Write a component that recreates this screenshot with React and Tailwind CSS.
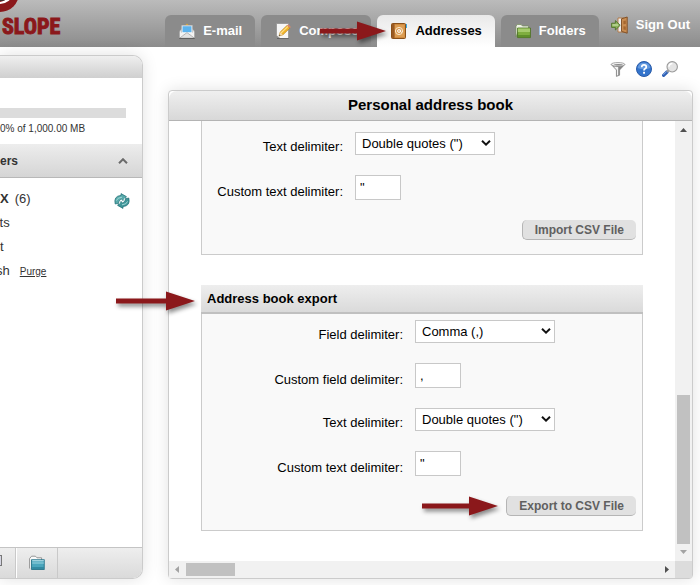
import React, { useId } from "react";

const MailIcon = () => (
  <svg width="16" height="16" viewBox="0 0 16 16" aria-hidden="true">
    <path d="M6 2.5 L8 0.6 L10 2.5Z" fill="#d9a93c" />
    <path d="M0.5 8 L3 5.5 H13 L15.5 8 V15 H0.5Z" fill="#e4e4e4" stroke="#8a8a8a" strokeWidth="0.6" />
    <rect x="2.5" y="2.2" width="11" height="9" fill="#f6f6f6" stroke="#9c9c9c" strokeWidth="0.4" />
    <rect x="3.5" y="3.2" width="9" height="6" fill="#5cb3ee" />
    <path d="M0.8 15 V8.4 L6 12 L8 10.4 L10 12 L15.2 8.4 V15Z" fill="#f3f3f3" />
    <path d="M0.8 15 L8 9.6 L15.2 15" fill="#e3e3e3" stroke="#a9a9a9" strokeWidth="0.8" />
    <path d="M0.3 15.4 H15.7" stroke="#555" strokeWidth="0.9" />
  </svg>
);

const ComposeIcon = () => (
  <svg width="16" height="16" viewBox="0 0 16 16" aria-hidden="true">
    <path d="M1.5 0.5 H13.5 V15.5 H5 L1.5 12.5Z" fill="#f7f7f7" stroke="#8c8c8c" strokeWidth="0.7" />
    <path d="M2 15.6 H13.8" stroke="#555" strokeWidth="0.8" />
    <path d="M4 13 L5.2 9 L12 2.4 L15 5 L8 11.8Z" fill="#f0b429" stroke="#b97d17" strokeWidth="0.6" />
    <path d="M6 10 L13 3.4" stroke="#ffe08a" strokeWidth="1.1" />
    <path d="M4 13 L5.2 9.2 L7.8 11.7Z" fill="#f2d6a8" />
    <path d="M4 13 L4.5 11.5 L5.5 12.4Z" fill="#333" />
    <path d="M12 2.4 L13.3 1.3 L15.9 3.9 L15 5Z" fill="#d9886b" />
  </svg>
);

const BookIcon = () => (
  <svg width="16" height="16" viewBox="0 0 16 16" aria-hidden="true">
    <rect x="12" y="1" width="4" height="4" fill="#38a9e4" />
    <rect x="12" y="5" width="3" height="9" fill="#e8e8e8" />
    <rect x="0.5" y="0.5" width="14" height="15" rx="1" fill="#cf8a3f" stroke="#8a5018" />
    <rect x="1" y="1" width="2.5" height="14" fill="#9a5a22" />
    <rect x="4" y="2" width="9.5" height="12" fill="#dc9c51" />
    <circle cx="8" cy="8" r="3.6" fill="none" stroke="#fbe8cc" strokeWidth="1" />
    <circle cx="8" cy="8" r="1.4" fill="none" stroke="#fff" strokeWidth="1" />
    <path d="M9.6 6.6 V9 Q10.4 10 11.4 8.6" fill="none" stroke="#fff" strokeWidth="0.8" />
  </svg>
);

const GreenFolderIcon = () => (
  <svg width="16" height="16" viewBox="0 0 16 16" aria-hidden="true">
    <path d="M1 14 V3 L2.5 1.5 H6 L7.5 3 H13.5 V6 H4Z" fill="#eef1e6" stroke="#76905a" strokeWidth="0.7" />
    <path d="M2.6 5 H15.4 V14.6 H2.6Z" fill="#7fae3f" stroke="#456b1c" strokeWidth="0.8" />
    <path d="M3 5.5 H15 V9 H3Z" fill="#a6cb6e" />
    <path d="M3 12 H15 V14.2 H3Z" fill="#5f8f2a" />
  </svg>
);

const SignOutIcon = () => (
  <svg width="17" height="18" viewBox="0 0 17 18" aria-hidden="true">
    <path d="M7 2 H13 V16 H7Z" fill="#ececec" stroke="#b5763f" strokeWidth="0.9" />
    <path d="M10.5 2.8 L16.2 1 V17.2 L10.5 15.4Z" fill="#c98d52" stroke="#7b4a1f" strokeWidth="0.9" />
    <path d="M12.4 5 L14.8 4.4 V8 L12.4 8.3Z M12.4 10.3 L14.8 10.5 V14 L12.4 13.4Z" fill="#a5672f" />
    <path d="M0.6 7.2 H4.4 V4.6 L9.2 9.3 L4.4 14 V11.4 H0.6Z" fill="#8db45c" stroke="#4f7128" strokeWidth="0.9" />
    <path d="M1.4 9 H7.2" stroke="#d3e7b4" strokeWidth="1" />
  </svg>
);

const FilterIcon = () => (
  <svg width="16" height="16" viewBox="0 0 16 16" aria-hidden="true">
    <path d="M1.2 3.5 L6.4 9 V15.4 L9.6 14.2 V9 L14.8 3.5Z" fill="#858585" stroke="#777" strokeWidth="0.6" />
    <path d="M3.6 5.5 L7 9 V14.6 L8.2 14.2 V6Z" fill="#f3f3f3" />
    <ellipse cx="8" cy="3.4" rx="6.8" ry="1.9" fill="#f0f0f0" stroke="#8a8a8a" strokeWidth="0.7" />
    <ellipse cx="8.4" cy="3.7" rx="4.4" ry="0.8" fill="#8a8a8a" />
  </svg>
);

const HelpIcon = () => (
  <svg width="16" height="16" viewBox="0 0 16 16" aria-hidden="true">
    <circle cx="8" cy="8" r="7.5" fill="#3374cc" stroke="#2a5ba8" />
    <path d="M1.6 7 A6.5 6.5 0 0 1 14.4 7 Q8 9.5 1.6 7Z" fill="#6399df" />
    <path d="M5.7 6.2 Q5.8 3.9 8 3.9 Q10.3 3.9 10.3 5.9 Q10.3 7 9 7.7 Q8 8.3 8 9.4" fill="none" stroke="#fff" strokeWidth="1.7" />
    <rect x="7.1" y="10.8" width="1.9" height="1.9" fill="#fff" />
  </svg>
);

const SearchIcon = () => (
  <svg width="16" height="16" viewBox="0 0 16 16" aria-hidden="true">
    <path d="M1.6 14.4 L5 11" stroke="#2d5fb4" strokeWidth="3.2" strokeLinecap="round" />
    <path d="M1.4 13.8 L4.8 10.4" stroke="#7fa9e6" strokeWidth="1" />
    <path d="M5 11 L7 9" stroke="#999" strokeWidth="1.8" />
    <circle cx="10.2" cy="5.8" r="5.2" fill="#e4e4e4" stroke="#9a9a9a" strokeWidth="1.1" />
    <path d="M7 5.8 A3.4 3.4 0 0 1 10.4 2.4" fill="none" stroke="#fff" strokeWidth="1.5" />
  </svg>
);

const RefreshIcon = () => (
  <svg width="16" height="16" viewBox="0 0 16 16" aria-hidden="true">
    <path d="M1.2 11 Q-0.6 3 7 2.4 V0.6 L12.4 3.6 L9.4 8 L7.6 6.2 Q5 6.8 4.6 10.2 Z" fill="#58a9aa" stroke="#1d6c72" strokeWidth="0.7" />
    <path d="M14.8 5 Q16.6 13 9 13.6 V15.4 L3.6 12.4 L6.6 8 L8.4 9.8 Q11 9.2 11.4 5.8 Z" fill="#3f9598" stroke="#1d6c72" strokeWidth="0.7" />
    <path d="M5.4 10.6 Q5.6 7.6 7.6 7 M10.6 5.4 Q10.4 8.4 8.4 9" fill="none" stroke="#fff" strokeWidth="1" />
    <path d="M2.4 7.6 Q3.2 4.6 8 4.2 M13.6 8.4 Q12.8 11.4 8 11.8" fill="none" stroke="#a9dcdb" strokeWidth="0.9" />
  </svg>
);

const TealFolderIcon = () => (
  <svg width="16" height="16" viewBox="0 0 16 16" aria-hidden="true">
    <path d="M0.6 13.5 V3.5 L2.6 1.2 H6.4 L8 2.8 H12.6 V6" fill="#fafafa" stroke="#8b8b8b" strokeWidth="0.9" />
    <rect x="2.6" y="4.8" width="12.6" height="9.6" fill="#4ba6bd" stroke="#1f6f86" strokeWidth="0.9" />
    <path d="M3.2 5.8 H14.8" stroke="#c2e6ee" strokeWidth="1.1" />
    <path d="M3.2 8 H14.8" stroke="#80c5d5" strokeWidth="1.6" />
    <path d="M3.2 13 H14.8" stroke="#2b8098" strokeWidth="1.4" />
  </svg>
);

// Red pointer used to mark each step
const Arrow = ({ shaft }) => (
  <svg
    width={shaft + 29}
    height="20"
    viewBox={`0 0 ${shaft + 29} 20`}
    className="drop-shadow-[2px_3px_2px_rgba(0,0,0,0.45)]"
    aria-hidden="true"
  >
    <path d={`M0 7.5 H${shaft} V0.5 L${shaft + 29} 10 L${shaft} 19.5 V12.5 H0Z`} fill="#8b181b" />
  </svg>
);

const Tab = ({ icon, label, active, children }) => (
  <a
    href="#"
    className={
      active
        ? "relative flex h-8 items-center gap-2 rounded-t-md bg-linear-to-b from-[#e9e9e9] to-white pr-[13px] pl-3.5 text-black"
        : "relative flex h-8 items-center gap-2 rounded-t-md bg-[#8b8b8b] pr-[13px] pl-3.5 text-white"
    }
  >
    {icon}
    {label}
    {children}
  </a>
);

const SelectField = ({ label, options }) => {
  const id = useId();
  return (
    <>
      <label htmlFor={id} className="text-right leading-4">{label}</label>
      <div className="relative w-[140px]">
        <select
          id={id}
          className="block h-[23px] w-full appearance-none border border-[#c8c8c8] bg-white pl-1.5 text-[13px] leading-5"
        >
          {options.map((option) => (
            <option key={option}>{option}</option>
          ))}
        </select>
        <svg
          width="10"
          height="6"
          viewBox="0 0 10 6"
          className="pointer-events-none absolute top-2 right-1"
          aria-hidden="true"
        >
          <path d="M1 0.8 L5 4.6 L9 0.8" fill="none" stroke="#111" strokeWidth="2" />
        </svg>
      </div>
    </>
  );
};

const TextField = ({ label, value }) => {
  const id = useId();
  return (
    <>
      <label htmlFor={id} className="text-right leading-4">{label}</label>
      <input
        id={id}
        type="text"
        defaultValue={value}
        className="block h-[25px] w-[46px] border border-[#c8c8c8] bg-white px-1 text-[13px]"
      />
    </>
  );
};

const ActionButton = ({ children }) => (
  <button
    type="button"
    className="h-5 rounded-[5px] border-b border-l border-[#b5b5b5] bg-[#e1e1e1] px-3 text-xs leading-4 font-bold text-[#606060]"
  >
    {children}
  </button>
);

const Sidebar = () => (
  <aside className="flex w-[143px] shrink-0 flex-col overflow-hidden rounded-r-[10px] border border-l-0 border-[#cbcbcb] bg-white text-[#333] shadow-[0_0_16px_rgba(0,0,0,0.12)]">
    <div className="h-[22px] bg-linear-to-b from-[#efefef] to-[#cfcfcf]" />
    <div className="h-[66px] pt-[30px] pr-4">
      <div className="h-2.5 bg-[#dcdcdc]" />
      <p className="pt-[3px] text-[10px] leading-4">0% of 1,000.00 MB</p>
    </div>
    <div className="flex h-[34px] items-center justify-between border-b border-[#b8b8b8] bg-linear-to-b from-[#ededed] to-[#d5d5d5] pr-3.5">
      <h2 className="text-xs leading-5 font-bold">ers</h2>
      <svg width="10" height="6" viewBox="0 0 10 6" aria-hidden="true">
        <path d="M1 5.2 L5 1.2 L9 5.2" fill="none" stroke="#6b6b6b" strokeWidth="2" />
      </svg>
    </div>
    <ul className="flex-1 pt-[9px] text-[13px] leading-6">
      <li className="flex items-center justify-between pr-3">
        <span>
          <a href="#" className="mr-1.5 font-bold">X</a>(6)
        </span>
        <button type="button" aria-label="Refresh" className="pt-1">
          <RefreshIcon />
        </button>
      </li>
      {/* Folder names run under the left edge */}
      <li className="-ml-1">
        <a href="#">fts</a>
      </li>
      <li>
        <a href="#">t</a>
      </li>
      <li className="-ml-1">
        <a href="#" className="mr-2.5">sh</a>
        <a href="#" className="text-[10px] underline">Purge</a>
      </li>
    </ul>
    <div className="flex h-[31px] border-t border-[#c4c4c4] bg-linear-to-b from-[#eeeeee] to-[#dadada]">
      <div className="w-4 border-r border-[#c9c9c9] pt-[7px]">
        <div className="h-[11px] w-0.5 border-y border-r border-[#777] bg-[#d5d5e2]" />
      </div>
      <button
        type="button"
        aria-label="Manage folders"
        className="flex w-[42px] items-center justify-center border-r border-l border-r-[#c9c9c9] border-l-white"
      >
        <TealFolderIcon />
      </button>
    </div>
  </aside>
);

const App = () => {
  return (
    <div className="flex min-h-screen flex-col overflow-hidden bg-white font-['Liberation_Sans',Arial,sans-serif] text-[13px] text-black">
      <header className="flex h-[47px] justify-between bg-linear-to-b from-[#bbbbbb] to-[#8c8c8c]">
        <div className="flex items-start text-[#8b181b]">
          <svg width="20" height="47" viewBox="0 0 20 47" className="-mr-5" aria-hidden="true">
            <circle cx="0" cy="-7" r="19" fill="#8b181b" />
            <ellipse cx="0" cy="-6" rx="12" ry="10" fill="#fff" />
            <ellipse cx="-1" cy="-6" rx="9" ry="8" fill="#8b181b" />
            <path d="M0 0.4 Q4 0.8 6.5 -1" fill="none" stroke="#333" strokeWidth="1" />
          </svg>
          <span className="pt-[15px] pl-0.5 font-['Liberation_Sans_Narrow','Roboto_Condensed','Open_Sans_Condensed','Liberation_Sans',sans-serif] text-[22px] leading-6 font-bold [-webkit-text-stroke:1px_#8b181b]">
            SLOPE
          </span>
        </div>
        <nav className="flex items-end gap-1.5 pr-2.5 text-[13px] font-bold">
          <Tab icon={<MailIcon />} label="E-mail" />
          <Tab icon={<ComposeIcon />} label="Compose" />
          <Tab icon={<BookIcon />} label="Addresses" active>
            <span className="absolute top-1.5 right-[109px]">
              <Arrow shaft={37} />
            </span>
          </Tab>
          <Tab icon={<GreenFolderIcon />} label="Folders" />
          <a href="#" className="flex items-center gap-2 self-start pt-[15px] pl-1.5 text-white">
            <SignOutIcon />
            Sign Out
          </a>
        </nav>
      </header>

      <div className="flex flex-1 pr-[7px] pb-1.5">
        <div className="flex pt-2">
          <Sidebar />
        </div>

        <main className="flex min-w-0 flex-1 flex-col pl-[25px]">
          <div className="flex h-[43px] items-center justify-end gap-2.5 pr-[15px]">
            <button type="button" aria-label="Filter"><FilterIcon /></button>
            <button type="button" aria-label="Help"><HelpIcon /></button>
            <button type="button" aria-label="Search"><SearchIcon /></button>
          </div>

          <section className="flex flex-1 flex-col rounded-sm border border-[#cbcbcb] bg-white shadow-[0_0_16px_rgba(0,0,0,0.12)]">
            <h1 className="h-[30px] rounded-t-lg border-b border-[#b4b4b4] bg-linear-to-b from-[#efefef] to-[#d8d8d8] text-center text-[15px] leading-7 font-bold">
              Personal address book
            </h1>

            <div className="flex flex-1">
              <div className="flex-1 px-8 pb-[30px]">
                <form className="border border-t-0 border-[#cbcbcb] bg-[#f9f9f9] pt-[11px] pr-1.5 pb-3.5">
                  <div className="grid grid-cols-[141px_1fr] items-end gap-x-3 gap-y-5 pb-5">
                    <SelectField label="Text delimiter:" options={['Double quotes (")']} />
                    <TextField label="Custom text delimiter:" value={'"'} />
                  </div>
                  <div className="flex justify-end">
                    <ActionButton>Import CSV File</ActionButton>
                  </div>
                </form>

                <div className="relative mt-[30px]">
                  <span className="absolute top-1.5 right-full mr-1.5">
                    <Arrow shaft={50} />
                  </span>
                  <h2 className="h-[29px] border-b-2 border-[#c0c0c0] bg-linear-to-b from-[#eeeeee] to-[#dadada] pl-1.5 text-[13px] leading-[27px] font-bold">
                    Address book export
                  </h2>
                  <form className="border border-t-0 border-[#cbcbcb] bg-[#f9f9f9] pt-1.5 pr-1.5 pb-3.5">
                    <div className="grid grid-cols-[201px_1fr] items-end gap-x-3 gap-y-5 pb-5">
                      <SelectField label="Field delimiter:" options={["Comma (,)", "Semicolon (;)"]} />
                      <TextField label="Custom field delimiter:" value="," />
                      <SelectField label="Text delimiter:" options={['Double quotes (")']} />
                      <TextField label="Custom text delimiter:" value={'"'} />
                    </div>
                    <div className="flex items-center justify-end gap-2">
                      <Arrow shaft={47} />
                      <ActionButton>Export to CSV File</ActionButton>
                    </div>
                  </form>
                </div>
              </div>

              {/* Vertical scrollbar */}
              <div className="flex w-[17px] flex-col items-center bg-[#f1f1f1]">
                <svg width="7" height="17" viewBox="0 0 7 17" aria-hidden="true">
                  <path d="M0 11 L3.5 7 L7 11Z" fill="#505050" />
                </svg>
                <div className="flex-1" />
                <div className="h-[149px] w-[13px] bg-[#c1c1c1]" />
                <svg width="7" height="17" viewBox="0 0 7 17" aria-hidden="true">
                  <path d="M0 6 L3.5 10 L7 6Z" fill="#a3a3a3" />
                </svg>
              </div>
            </div>

            {/* Horizontal scrollbar */}
            <div className="flex h-[17px] items-center bg-[#f1f1f1]">
              <svg width="17" height="7" viewBox="0 0 17 7" aria-hidden="true">
                <path d="M10 0 L6 3.5 L10 7Z" fill="#a3a3a3" />
              </svg>
              <div className="h-[13px] w-[49px] bg-[#c1c1c1]" />
              <div className="flex-1" />
              <svg width="17" height="7" viewBox="0 0 17 7" aria-hidden="true">
                <path d="M7 0 L11 3.5 L7 7Z" fill="#505050" />
              </svg>
              <div className="h-full w-[17px] bg-[#dcdcdc]" />
            </div>
          </section>
        </main>
      </div>
    </div>
  );
};

export default App;
